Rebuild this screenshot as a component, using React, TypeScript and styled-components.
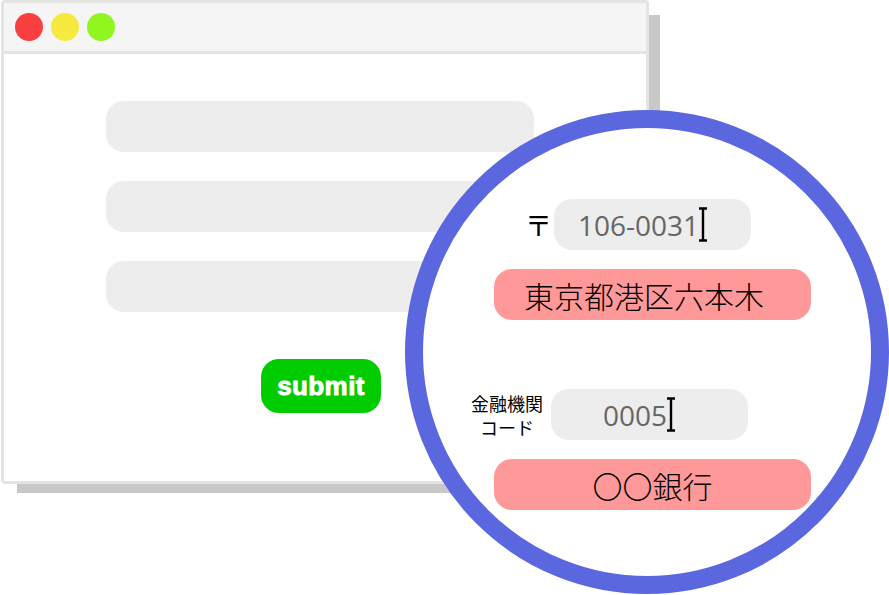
import * as React from 'react'
import styled, { createGlobalStyle } from 'styled-components'

const GlobalStyle = createGlobalStyle`
	html, body {
		margin: 0;
		padding: 0;
		background: #fff;
	}
`

// I-beam text cursor shown after the typed value
const Caret = () => (
	<CaretIcon width="10" height="35" viewBox="0 0 10 35">
		<path d="M1 1.5H9M5 1.5V33.5M1 33.5H9" stroke="#000" strokeWidth="2.4" fill="none" />
	</CaretIcon>
)

const App: React.FC = () => {
	return (
		<Page>
			<GlobalStyle />

			{/* Browser window */}
			<BrowserWindow>
				<TitleBar>
					<Dot $color="#f94040" />
					<Dot $color="#f5ea3d" />
					<Dot $color="#91f51f" />
				</TitleBar>

				<Form>
					<BlankField />
					<BlankField />
					<BlankField />
					<SubmitButton>submit</SubmitButton>
				</Form>
			</BrowserWindow>

			{/* Magnified lens */}
			<Lens>
				<LensRow $indent={100}>
					<PostalMark>〒</PostalMark>
					<ValueField $left={24}>106-0031<Caret /></ValueField>
				</LensRow>
				<ResultPill $left={30}>東京都港区六本木</ResultPill>

				<LensRow $indent={48} $spaced>
					<BankLabel>金融機関<br />コード</BankLabel>
					<ValueField $left={52}>0005<Caret /></ValueField>
				</LensRow>
				<ResultPill $centered>〇〇銀行</ResultPill>
			</Lens>
		</Page>
	)
}

export default App

const Page = styled.div`
	position: relative;
	isolation: isolate;
	width: 889px;
	height: 595px;
	overflow: hidden;
	padding-left: 1px;
	box-sizing: border-box;
	background: #fff;
`

const BrowserWindow = styled.div`
	position: relative;
	width: 648px;
	height: 484px;
	box-sizing: border-box;
	border: 3px solid #e4e5e0;
	border-radius: 4px;
	background: #fff;

	&::after {
		content: '';
		position: absolute;
		z-index: -1;
		left: 13px;
		top: 12px;
		width: 643px;
		height: 478px;
		background: #c8c8c8;
	}
`

const TitleBar = styled.div`
	display: flex;
	align-items: center;
	gap: 8px;
	height: 51px;
	box-sizing: border-box;
	padding: 0 0 0 11px;
	border-bottom: 3px solid #e4e5e0;
	background: #f5f5f5;
`

const Dot = styled.span<{ $color: string }>`
	width: 28px;
	height: 28px;
	border-radius: 50%;
	background: ${(p) => p.$color};
`

const Form = styled.div`
	display: flex;
	flex-direction: column;
	align-items: flex-start;
	padding: 47px 0 0 102px;
`

const BlankField = styled.div`
	width: 428px;
	height: 51px;
	margin-bottom: 29px;
	border-radius: 18px;
	background: #ededed;
`

const SubmitButton = styled.div`
	display: flex;
	align-items: center;
	justify-content: center;
	width: 120px;
	height: 54px;
	margin: 18px 0 0 155px;
	border-radius: 18px;
	background: #00cc00;
	color: #fff;
	font-family: 'Liberation Sans', sans-serif;
	font-size: 26px;
	font-weight: 700;
	-webkit-text-stroke: 0.9px #fff;
	letter-spacing: 0.4px;
`

const Lens = styled.div`
	position: absolute;
	left: 405px;
	top: 110px;
	width: 484px;
	height: 484px;
	box-sizing: border-box;
	padding: 71px 0 0 71px;
	border: 18px solid #5b67df;
	border-radius: 50%;
	background: #fff;
	font-family: 'Noto Sans CJK JP', sans-serif;
	color: #000;
`

const LensRow = styled.div<{ $indent: number; $spaced?: boolean }>`
	display: flex;
	align-items: center;
	height: 51px;
	margin-top: ${(p) => (p.$spaced ? 69 : 0)}px;
	margin-left: ${(p) => p.$indent - 71}px;
`

const PostalMark = styled.span`
	width: 31px;
	margin-left: 0;
	font-size: 27px;
	line-height: 1;
	text-indent: 2px;
`

const BankLabel = styled.span`
	width: 80px;
	padding-right: 8px;
	box-sizing: border-box;
	font-size: 18px;
	line-height: 24px;
	text-align: center;
	white-space: nowrap;
`

const ValueField = styled.div<{ $left: number }>`
	display: flex;
	align-items: center;
	width: 197px;
	height: 51px;
	box-sizing: border-box;
	padding-left: ${(p) => p.$left}px;
	border-radius: 18px;
	background: #ededed;
	color: #666;
	font-family: 'Open Sans', sans-serif;
	font-size: 28px;
`

const CaretIcon = styled.svg`
	flex: none;
	margin-left: -1px;
`

const ResultPill = styled.div<{ $left?: number; $centered?: boolean }>`
	display: flex;
	align-items: center;
	justify-content: ${(p) => (p.$centered ? 'center' : 'flex-start')};
	width: 317px;
	height: 51px;
	margin-top: 19px;
	box-sizing: border-box;
	padding-left: ${(p) => p.$left ?? 0}px;
	border-radius: 18px;
	background: #ff9999;
	font-size: 30px;
	font-weight: 300;
`
